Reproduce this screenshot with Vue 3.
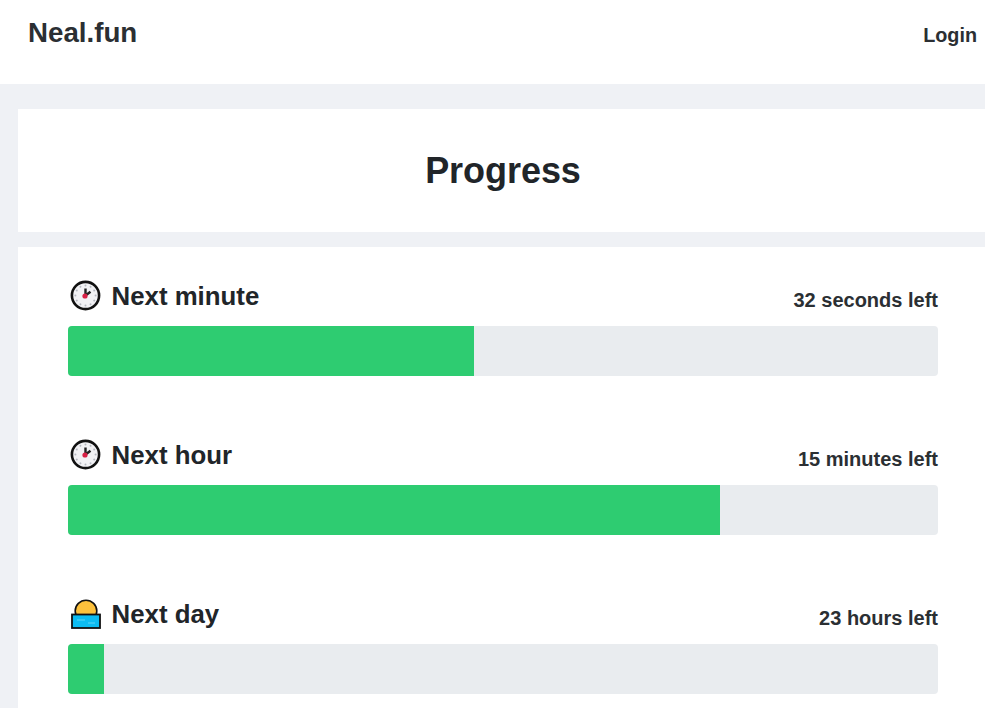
<script setup>
const rows = [
  { id: 'minute', label: 'Next minute', left: '32 seconds left', pct: 46.67, icon: 'clock' },
  { id: 'hour', label: 'Next hour', left: '15 minutes left', pct: 74.94, icon: 'clock' },
  { id: 'day', label: 'Next day', left: '23 hours left', pct: 4.14, icon: 'sun' },
]
const ticks = Array.from({ length: 12 }, (_, i) => i * 30)
</script>

<template>
  <div class="page">
    <header class="topbar">
      <a class="brand">Neal.fun</a>
      <a class="login">Login</a>
    </header>
    <main class="content">
      <section class="card title-card">
        <h1>Progress</h1>
      </section>
      <section class="card list-card">
        <div v-for="row in rows" :key="row.id" class="row">
          <div class="row-head">
            <h2>
              <svg v-if="row.icon === 'clock'" class="icon" viewBox="0 0 34 34">
                <circle cx="16.5" cy="16.5" r="13.6" fill="#f1f1f4" stroke="#111" stroke-width="2.6" />
                <g fill="#b4b7bf">
                  <circle v-for="t in ticks" :key="t" cx="16.5" cy="6.4" r="1" :transform="`rotate(${t} 16.5 16.5)`" />
                </g>
                <path d="M16.5 16.5V9.5M16.5 16.5l5-3.8" stroke="#222" stroke-width="2.4" fill="none" />
                <circle cx="16" cy="17" r="2.6" fill="#d81f45" />
              </svg>
              <svg v-else class="icon" viewBox="0 0 34 34">
                <circle cx="17" cy="14" r="10.8" fill="#fdc13c" stroke="#111" stroke-width="1.6" />
                <rect x="3" y="17.5" width="28" height="13.5" fill="#0cbcf2" stroke="#111" stroke-width="1.8" />
                <path d="M8 23h8M19 26h7" stroke="#5fd6f8" stroke-width="1.2" />
              </svg>
              <span>{{ row.label }}</span>
            </h2>
            <span class="left">{{ row.left }}</span>
          </div>
          <div class="track">
            <div class="fill" :style="{ width: row.pct + '%' }"></div>
          </div>
        </div>
      </section>
    </main>
  </div>
</template>

<style>
html,
body {
  margin: 0;
  overflow: hidden;
  background: #eff1f5;
}
</style>

<style scoped>
.page {
  width: 985px;
  height: 708px;
  overflow: hidden;
  font-family: "Liberation Sans", Arial, sans-serif;
  color: #212529;
}

.topbar {
  height: 84px;
  background: #fff;
  display: flex;
  justify-content: space-between;
  box-sizing: border-box;
  padding: 0 8px 0 28px;
}

.brand {
  font-size: 27.7px;
  font-weight: 700;
  line-height: 32px;
  margin-top: 17px;
  color: #2b2f33;
}

.login {
  font-size: 19.8px;
  font-weight: 700;
  line-height: 24px;
  margin-top: 23px;
  color: #2b2f33;
}

.content {
  padding: 25px 0 0 18px;
  width: 970px;
}

.card {
  background: #fff;
  width: 970px;
}

.title-card {
  height: 123px;
  display: flex;
  align-items: center;
  justify-content: center;
  margin-bottom: 15px;
}

h1 {
  margin: 0;
  font-size: 36px;
  line-height: 42px;
  font-weight: 700;
  letter-spacing: -0.05px;
}

.list-card {
  box-sizing: border-box;
  padding: 32px 50px 40px;
}

.row {
  margin-bottom: 62px;
}

.row-head {
  display: flex;
  justify-content: space-between;
  align-items: flex-end;
  height: 34px;
  margin-bottom: 13px;
}

h2 {
  margin: 0;
  display: flex;
  align-items: center;
  gap: 8.6px;
  font-size: 25.8px;
  line-height: 32px;
  font-weight: 700;
  padding-left: 1px;
}

.icon {
  width: 34px;
  height: 34px;
  flex: none;
}

.left {
  font-size: 20px;
  font-weight: 700;
  line-height: 24px;
  margin-bottom: 1px;
  color: #2b2f33;
}

.track {
  height: 50px;
  background: #e9ecef;
  border-radius: 4px;
  overflow: hidden;
}

.fill {
  height: 100%;
  background: #2ecc71;
}
</style>
